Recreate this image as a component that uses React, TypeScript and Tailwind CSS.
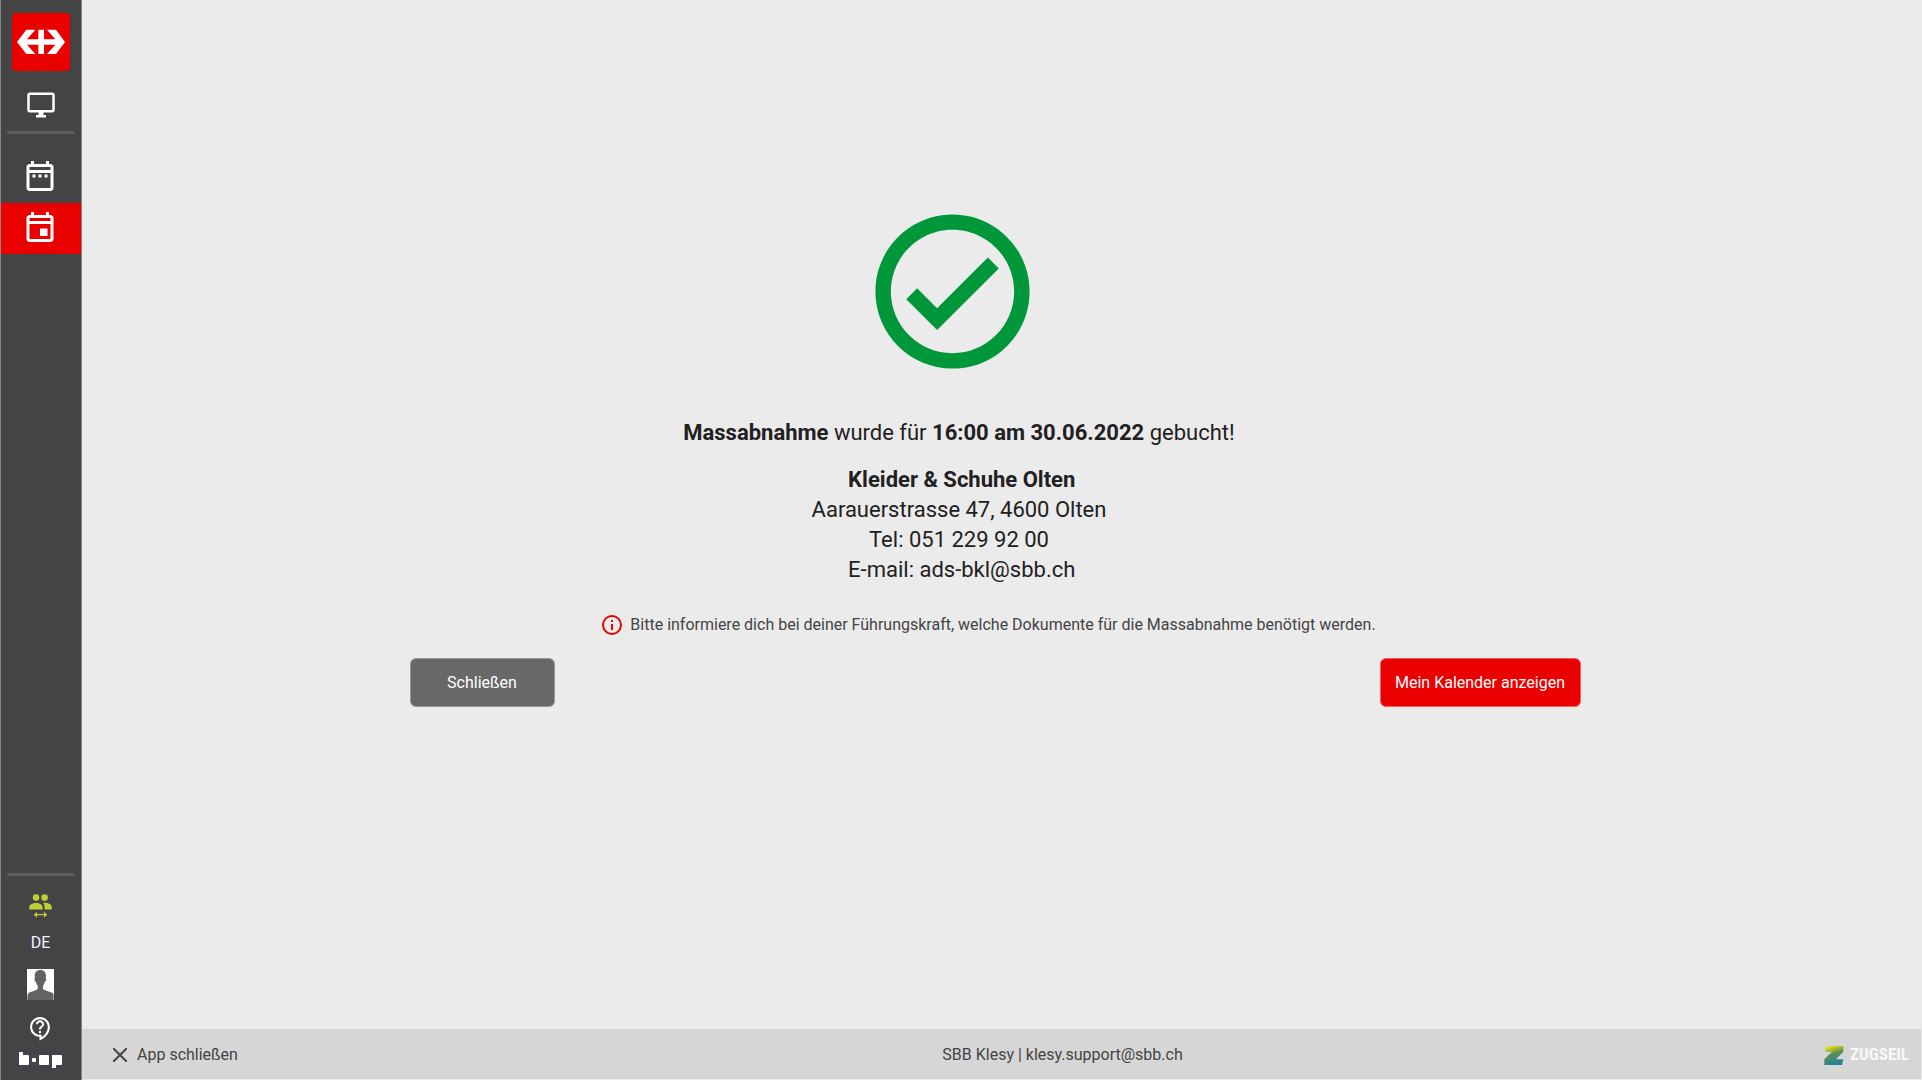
import React from 'react'
import { MdOutlineContactSupport, MdOutlineDesktopWindows } from 'react-icons/md'

const calendarFrame =
  'M19 4h-1V2h-2v2H8V2H6v2H5c-1.1 0-2 .9-2 2v14c0 1.1.9 2 2 2h14c1.1 0 2-.9 2-2V6c0-1.1-.9-2-2-2zm0 16H5V10h14v10zm0-12H5V6h14v2z'

function SbbLogo() {
  return (
    <svg viewBox="36 39 174 174" className="size-[58px]" aria-hidden="true">
      <rect x="36" y="39" width="174" height="174" rx="12" fill="#eb0000" />
      <path
        fill="#fff"
        d="M51 126 79 89h27l-25 29h34V89h17v29h34l-25-29h27l27 37-27 36h-27l25-28h-34v28h-17v-28H81l25 28H79z"
      />
    </svg>
  )
}

function Divider() {
  return <hr className="mx-auto h-[3px] w-[68px] rounded-full border-0 bg-[#5e5e5e]" />
}

function Sidebar() {
  return (
    <nav className="flex w-[82px] shrink-0 flex-col border-x border-[#858585] bg-[#444] text-white">
      <a href="#" aria-label="SBB" className="mx-auto mt-[13px]">
        <SbbLogo />
      </a>
      <a href="#" aria-label="Desktop" className="mx-auto mt-[19px] mb-[11px]">
        <MdOutlineDesktopWindows size={30} />
      </a>
      <Divider />

      <a href="#" aria-label="Termine" className="mt-[18px] flex h-[51px] justify-center pt-1.5 pr-[3px]">
        <svg viewBox="0 0 24 24" className="size-9" fill="currentColor">
          <path d={calendarFrame} />
          <path d="M7 11h2v2H7zM11 11h2v2h-2zM15 11h2v2h-2z" />
        </svg>
      </a>
      <a href="#" aria-label="Mein Kalender" className="flex h-[51px] justify-center bg-[#eb0000] pt-1.5 pr-[3px]">
        <svg viewBox="0 0 24 24" className="size-9" fill="currentColor">
          <path d={calendarFrame} />
          <path d="M12 13h5v5h-5z" />
        </svg>
      </a>

      {/* Bottom tools */}
      <div className="mt-auto flex flex-col items-center pr-px pb-[9px]">
        <Divider />
        <button aria-label="Benutzer wechseln" className="mt-[18px]">
          <svg viewBox="0 0 69 73" className="h-6 w-[23px]" fill="#bfcf3a">
            <circle cx="21" cy="11" r="10" />
            <circle cx="47" cy="11" r="10" />
            <path d="M0 47v-6c0-9 10-14 21-14s20 5 20 14v6zM43 27c15-1 26 5 26 14v6H47v-6c0-6-1-10-4-14z" />
            <path d="M14 63l10-9v7h21v-7l10 9-10 9v-7H24v7z" />
          </svg>
        </button>
        <button className="mt-[13px] text-base leading-6 text-[#f0f4ff]">DE</button>
        <button aria-label="Profil" className="mt-3.5">
          <svg viewBox="0 0 81 93" className="h-[31px] w-[27px]">
            <rect width="81" height="93" fill="#fff" />
            <path
              fill="#636363"
              d="M40 3c11 0 17 7 17 18l-1 6c2 0 2 3 1 7s-2 5-4 5c-1 6-3 9-5 11v9c2 6 26 8 31 15 1 3 1 11 1 19H1c0-8 0-16 2-19 4-7 27-9 29-15v-9c-2-2-4-5-5-11-2 0-3-2-4-5s-1-7 1-7l-1-6C23 10 29 3 40 3z"
            />
          </svg>
        </button>
        <button aria-label="Hilfe" className="mt-4">
          <MdOutlineContactSupport size={25} />
        </button>
        <svg viewBox="0 0 54 21" className="mt-[9px] h-[21px] w-[54px]" role="img" aria-label="boop">
          <rect width="54" height="21" fill="#44434c" />
          <g fill="#fff">
            <rect x="5" y="2" width="4" height="13" />
            <rect x="5" y="5" width="10" height="10" rx="1" />
            <rect x="18" y="8" width="4" height="4" rx="1" />
            <rect x="25" y="5" width="10" height="10" rx="1" />
            <rect x="38" y="5" width="10" height="10" rx="1" />
            <rect x="38" y="5" width="4" height="13" />
          </g>
        </svg>
      </div>
    </nav>
  )
}

function Confirmation() {
  return (
    <main className="flex flex-1 flex-col items-center pt-[199px] pr-3.5">
      <div className="flex w-full max-w-[1171px] flex-col">
        <div className="flex justify-center pr-[85px]">
          <svg viewBox="0 0 24 24" className="size-[185px]" fill="#00973b" aria-hidden="true">
            <path d="M12 2C6.48 2 2 6.48 2 12s4.48 10 10 10 10-4.48 10-10S17.52 2 12 2zm0 18c-4.41 0-8-3.59-8-8s3.59-8 8-8 8 3.59 8 8-3.59 8-8 8zm4.59-12.42L10 14.17l-2.59-2.58L6 13l4 4 8-8z" />
          </svg>
        </div>

        <div className="mt-[34px] pr-[72px] text-center text-[22px] leading-[30px] text-[#212121]">
          <p className="mb-[17px]">
            <b>Massabnahme</b> wurde für <b>16:00 am 30.06.2022</b> gebucht!
          </p>
          <address className="not-italic">
            <b>&nbsp;Kleider &amp; Schuhe Olten</b>
            <br />
            Aarauerstrasse 47, 4600 Olten
            <br />
            Tel: 051 229 92 00
            <br />
            &nbsp;E-mail: ads-bkl@sbb.ch
          </address>
        </div>

        <p className="mt-[28px] flex items-center justify-center gap-1.5 pr-3.5 text-base leading-6 text-[#444]">
          <svg viewBox="0 0 24 24" className="size-6 shrink-0" fill="none" stroke="#eb0000" strokeWidth="2" aria-hidden="true">
            <circle cx="12" cy="12" r="9" />
            <path d="M12 11v6M12 7v2" />
          </svg>
          Bitte informiere dich bei deiner Führungskraft, welche Dokumente für die Massabnahme benötigt werden.
        </p>

        <div className="mt-[21px] flex justify-between text-base text-white">
          <button className="h-[49px] w-[145px] rounded-md border border-[#999] bg-[#686868]">Schließen</button>
          <button className="h-[49px] w-[201px] rounded-md border border-[#f06060] bg-[#eb0000]">
            Mein Kalender anzeigen
          </button>
        </div>
      </div>
    </main>
  )
}

function Footer() {
  return (
    <footer className="mr-px mb-px flex h-[50px] items-center justify-between bg-[#d6d6d6] pt-0.5 pr-3 pl-[31px] text-base text-[#444]">
      <button className="flex w-[188px] items-center gap-2.5">
        <svg viewBox="0 0 14 14" className="size-3.5" stroke="currentColor" strokeWidth="2" aria-hidden="true">
          <path d="M0 0l14 14M14 0L0 14" />
        </svg>
        App schließen
      </button>
      <p>
        SBB Klesy | <a href="mailto:klesy.support@sbb.ch">klesy.support@sbb.ch</a>
      </p>
      <div className="flex items-center gap-1.5">
        <svg viewBox="0 0 60 57" className="h-[19px] w-5" aria-hidden="true">
          <defs>
            <linearGradient id="zug" x1="0" y1="0" x2="0.3" y2="1">
              <stop offset="0.1" stopColor="#e6e21c" />
              <stop offset="0.5" stopColor="#5d8f4c" />
              <stop offset="1" stopColor="#2a8296" />
            </linearGradient>
          </defs>
          <path fill="url(#zug)" d="M8 0h50v17L36 40h22l-4 17H1V40l23-23H2z" />
        </svg>
        <span className="font-['Liberation_Sans_Narrow','Roboto_Condensed',Roboto,sans-serif] text-[17px] font-bold text-[#f8f8f8]">
          ZUGSEIL
        </span>
      </div>
    </footer>
  )
}

export default function App() {
  return (
    <div className="flex min-h-screen bg-[#ebebeb] font-[Roboto,sans-serif]">
      <Sidebar />
      <div className="flex min-w-0 flex-1 flex-col">
        <Confirmation />
        <Footer />
      </div>
    </div>
  )
}
